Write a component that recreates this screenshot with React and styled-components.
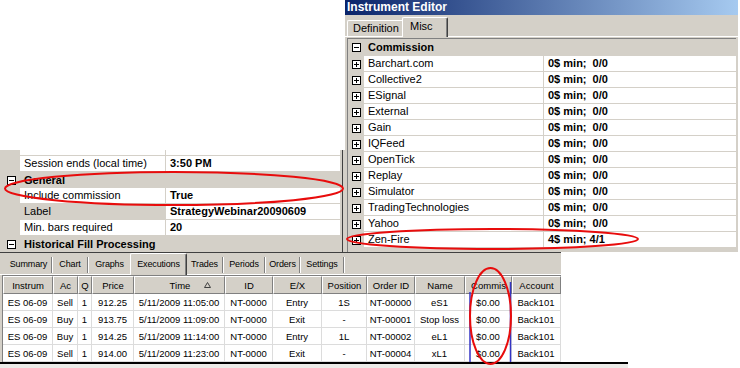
import React from "react";
import styled, { createGlobalStyle, css } from "styled-components";

const FONT = `"Liberation Sans", Arial, sans-serif`;
const FACE = "#d4d0c8";

const GlobalStyle = createGlobalStyle`
  *, *::before, *::after { box-sizing: border-box; }
  html, body { margin: 0; padding: 0; background: #fff; }
  body { width: 740px; height: 368px; overflow: hidden; font-family: ${FONT}; color: #000; }
`;

const Desktop = styled.div`
  position: relative;
  width: 740px;
  height: 368px;
  background: #fff;
  overflow: hidden;
`;

const Win = styled.div`
  position: absolute;
  left: ${(p) => p.$x}px;
  top: ${(p) => p.$y}px;
  width: ${(p) => p.$w}px;
  height: ${(p) => p.$h}px;
  background: ${FACE};
  display: flex;
  flex-direction: ${(p) => (p.$row ? "row" : "column")};
  overflow: hidden;
  ${(p) => p.$topLine && css`border-top: 1px solid #404040;`}
`;

/* ---------- Instrument editor ---------- */
const TitleBar = styled.div`
  flex: none;
  height: 15px;
  padding-left: 2px;
  background: linear-gradient(90deg, #0a246a 0%, #a6caf0 100%);
  color: #fff;
  font: bold 12px/15px ${FONT};
  white-space: nowrap;
`;

const EditorTabs = styled.div`
  flex: none;
  height: 22px;
  display: flex;
  align-items: flex-end;
  padding-left: 2px;
  box-shadow: inset 0 -1px 0 #fff;
`;

const EditorTab = styled.div`
  width: ${(p) => p.$w}px;
  height: 16px;
  margin-bottom: 1px;
  padding-left: ${(p) => p.$pl}px;
  border-top: 1px solid #fff;
  border-left: 1px solid #fff;
  border-radius: 2px 0 0 0;
  font: 11px/14px ${FONT};
  white-space: nowrap;
  ${(p) =>
    p.$active &&
    css`
      height: 20px;
      margin-bottom: 0;
      background: ${FACE};
      border-right: 1px solid #404040;
      box-shadow: inset -1px 0 0 #808080;
      border-radius: 2px 2px 0 0;
      line-height: 16px;
    `}
`;

const EditorBody = styled.div`
  flex: 1;
  min-height: 0;
  display: flex;
  padding: 1px 2px 0 2px;
`;

const PropGrid = styled.div`
  flex: 1;
  min-width: 0;
  display: flex;
  flex-direction: column;
  background: #fff;
  overflow: hidden;
  ${(p) => p.$framed && css`
    border-top: 1px solid #808080;
    border-left: 1px solid #808080;
  `}
`;

const Row = styled.div`
  flex: none;
  display: grid;
  grid-template-columns: ${(p) => p.$m}px ${(p) => p.$n}px 1fr;
  height: ${(p) => p.$h || 16}px;
  font: 11px/15px ${FONT};
`;

const Margin = styled.div`
  background: ${FACE};
  display: flex;
  align-items: center;
  padding-left: ${(p) => p.$pad}px;
`;

const NameCell = styled.div`
  background: ${(p) => (p.$sel ? FACE : "#fff")};
  border-right: 1px solid ${FACE};
  border-bottom: 1px solid ${FACE};
  padding-left: 4px;
  white-space: nowrap;
  overflow: hidden;
`;

const ValueCell = styled.div`
  background: #fff;
  border-bottom: 1px solid ${FACE};
  padding-left: 4px;
  font-weight: bold;
  white-space: pre;
  overflow: hidden;
`;

const CategoryRow = styled.div`
  flex: none;
  display: flex;
  height: ${(p) => p.$h || 16}px;
  background: ${FACE};
  font: bold 11px/15px ${FONT};
  white-space: nowrap;
`;

const CatMargin = styled.div`
  width: ${(p) => p.$m}px;
  flex: none;
  display: flex;
  align-items: center;
  padding-left: ${(p) => p.$pad}px;
`;

const CatLabel = styled.div`
  padding-left: 4px;
  display: flex;
  align-items: center;
`;

const ExpandBox = styled.span`
  position: relative;
  flex: none;
  width: 9px;
  height: 9px;
  border: 1px solid #000;
  background: #fff;
  &::before {
    content: "";
    position: absolute;
    left: 1px;
    top: 3px;
    width: 5px;
    height: 1px;
    background: #000;
  }
  ${(p) =>
    p.$plus &&
    css`
      &::after {
        content: "";
        position: absolute;
        left: 3px;
        top: 1px;
        width: 1px;
        height: 5px;
        background: #000;
      }
    `}
`;

const ScrollEdge = styled.div`
  flex: none;
  width: 5px;
  background: linear-gradient(90deg, ${FACE} 0 2px, #404040 2px 3px, ${FACE} 3px);
`;

/* ---------- Bottom results window ---------- */
const ResultTabs = styled.div`
  flex: none;
  height: 22px;
  display: flex;
  padding-left: 6px;
  box-shadow: inset 0 -1px 0 #fff;
`;

const ResultTab = styled.div`
  position: relative;
  flex: none;
  width: ${(p) => p.$w}px;
  display: flex;
  align-items: center;
  justify-content: center;
  font: 9px ${FONT};
  letter-spacing: -0.15px;
  white-space: nowrap;
  padding-right: ${(p) => (p.$sep ? 2 : 0)}px;
  ${(p) =>
    p.$sep &&
    css`
      &::after {
        content: "";
        position: absolute;
        right: 0;
        top: 4px;
        bottom: 2px;
        width: 2px;
        border-left: 1px solid #808080;
        border-right: 1px solid #fff;
      }
    `}
  ${(p) =>
    p.$active &&
    css`
      background: ${FACE};
      border-top: 1px solid #fff;
      border-left: 1px solid #fff;
      border-right: 1px solid #404040;
      box-shadow: inset -1px 0 0 #808080;
      border-radius: 2px 2px 0 0;
      padding-bottom: 2px;
    `}
`;

const COLS = [50, 25, 14, 42, 91, 48, 49, 45, 48, 50, 47, 49];

const Table = styled.div`
  margin-left: 2px;
  border-left: 1px solid #808080;
  border-top: 1px solid #808080;
  display: grid;
  grid-template-columns: ${COLS.map((c) => `${c}px`).join(" ")};
  grid-template-rows: 18px;
  grid-auto-rows: 17px;
  background: #fff;
  font: 9.5px ${FONT};
  flex: 1;
  align-content: start;
`;

const HeadCell = styled.div`
  background: ${FACE};
  border-style: solid;
  border-width: 1px;
  border-color: #fff #808080 #808080 #fff;
  display: flex;
  align-items: center;
  justify-content: center;
  gap: 14px;
  padding-left: ${(p) => (p.$sort ? 22 : 0)}px;
  white-space: nowrap;
  overflow: hidden;
`;

const Cell = styled.div`
  border-right: 1px solid #dcdcdc;
  border-bottom: 1px solid #dcdcdc;
  display: flex;
  align-items: center;
  justify-content: center;
  white-space: nowrap;
  overflow: hidden;
`;

const BottomEdge = styled.div`
  position: absolute;
  left: 0;
  top: 362px;
  width: 628px;
  height: 6px;
  border-top: 2px solid #000;
  background: #ecebe8;
`;

const Annotation = styled.svg`
  position: absolute;
  left: 0;
  top: 0;
  width: 740px;
  height: 368px;
  pointer-events: none;
  z-index: 5;
`;

/* ---------- data ---------- */
const INSTR = [
  ["Barchart.com", "0$ min;  0/0"],
  ["Collective2", "0$ min;  0/0"],
  ["ESignal", "0$ min;  0/0"],
  ["External", "0$ min;  0/0"],
  ["Gain", "0$ min;  0/0"],
  ["IQFeed", "0$ min;  0/0"],
  ["OpenTick", "0$ min;  0/0"],
  ["Replay", "0$ min;  0/0"],
  ["Simulator", "0$ min;  0/0"],
  ["TradingTechnologies", "0$ min;  0/0"],
  ["Yahoo", "0$ min;  0/0"],
  ["Zen-Fire", "4$ min; 4/1"],
];

const TABS = [
  { t: "Summary", w: 47, sep: true },
  { t: "Chart", w: 36, sep: true },
  { t: "Graphs", w: 41 },
  { t: "Executions", w: 57, active: true },
  { t: "Trades", w: 37, sep: true },
  { t: "Periods", w: 42, sep: true },
  { t: "Orders", w: 35, sep: true },
  { t: "Settings", w: 44, sep: true },
];

const HEAD = ["Instrum", "Ac", "Q", "Price", "Time", "ID", "E/X", "Position", "Order ID", "Name", "Commis", "Account"];

const ROWS = [
  ["ES 06-09", "Sell", "1", "912.25", "5/11/2009 11:05:00", "NT-0000", "Entry", "1S", "NT-00000", "eS1", "$0.00", "Back101"],
  ["ES 06-09", "Buy", "1", "913.75", "5/11/2009 11:09:00", "NT-0000", "Exit", "-", "NT-00001", "Stop loss", "$0.00", "Back101"],
  ["ES 06-09", "Buy", "1", "914.25", "5/11/2009 11:14:00", "NT-0000", "Entry", "1L", "NT-00002", "eL1", "$0.00", "Back101"],
  ["ES 06-09", "Sell", "1", "914.00", "5/11/2009 11:23:00", "NT-0000", "Exit", "-", "NT-00004", "xL1", "$0.00", "Back101"],
];

const SortGlyph = () => (
  <svg width="7" height="6" viewBox="0 0 7 6">
    <path d="M3.5 0.5 L6.5 5.5 L0.5 5.5 Z" fill="none" stroke="#404040" strokeWidth="1" />
  </svg>
);

function LeftRow({ name, value, sel, h }) {
  return (
    <Row $m={20} $n={146} $h={h}>
      <Margin $pad={7} />
      <NameCell $sel={sel}>{name}</NameCell>
      <ValueCell>{value}</ValueCell>
    </Row>
  );
}

function LeftCat({ label }) {
  return (
    <CategoryRow>
      <CatMargin $m={20} $pad={7}>
        <ExpandBox />
      </CatMargin>
      <CatLabel>{label}</CatLabel>
    </CategoryRow>
  );
}

export default function App() {
  return (
    <Desktop>
      <GlobalStyle />

      {/* Strategy property grid */}
      <Win $x={0} $y={150} $w={345} $h={102} $row>
        <PropGrid>
          <LeftRow name="" value="" h={6} />
          <LeftRow name="Session ends (local time)" value="3:50 PM" />
          <LeftCat label="General" />
          <LeftRow name="Include commission" value="True" />
          <LeftRow name="Label" value="StrategyWebinar20090609" sel />
          <LeftRow name="Min. bars required" value="20" />
          <LeftCat label="Historical Fill Processing" />
        </PropGrid>
        <ScrollEdge />
      </Win>

      {/* Instrument Editor */}
      <Win $x={345} $y={0} $w={393} $h={252}>
        <TitleBar>Instrument Editor</TitleBar>
        <EditorTabs>
          <EditorTab $w={55} $pl={5}>Definition</EditorTab>
          <EditorTab $w={46} $pl={7} $active>Misc</EditorTab>
        </EditorTabs>
        <EditorBody>
          <PropGrid $framed>
            <CategoryRow $h={17}>
              <CatMargin $m={16} $pad={4}>
                <ExpandBox />
              </CatMargin>
              <CatLabel>Commission</CatLabel>
            </CategoryRow>
            {INSTR.map(([n, v]) => (
              <Row key={n} $m={16} $n={180}>
                <Margin $pad={4}>
                  <ExpandBox $plus />
                </Margin>
                <NameCell>{n}</NameCell>
                <ValueCell>{v}</ValueCell>
              </Row>
            ))}
            <CategoryRow>
              <CatMargin $m={16} $pad={4}>
                <ExpandBox />
              </CatMargin>
            </CategoryRow>
          </PropGrid>
        </EditorBody>
      </Win>

      {/* Strategy analyzer results */}
      <Win $x={0} $y={252} $w={561} $h={110} $topLine>
        <ResultTabs>
          {TABS.map((t) => (
            <ResultTab key={t.t} $w={t.w} $sep={t.sep} $active={t.active}>
              {t.t}
            </ResultTab>
          ))}
        </ResultTabs>
        <Table>
          {HEAD.map((h) =>
            h === "Time" ? (
              <HeadCell key={h} $sort>
                <span>{h}</span>
                <SortGlyph />
              </HeadCell>
            ) : (
              <HeadCell key={h}>{h}</HeadCell>
            )
          )}
          {ROWS.map((r, i) => r.map((c, j) => <Cell key={`${i}-${j}`}>{c}</Cell>))}
        </Table>
      </Win>

      <BottomEdge />

      <Annotation viewBox="0 0 740 368">
        <line x1="470" y1="292" x2="470" y2="362" stroke="#3434c4" strokeWidth="1.5" />
        <line x1="510.5" y1="282" x2="510.5" y2="362" stroke="#3434c4" strokeWidth="1.5" />
        <ellipse cx="174" cy="188.5" rx="169" ry="16.5" fill="none" stroke="#e80c0c" strokeWidth="2" />
        <ellipse cx="492.5" cy="239" rx="145.5" ry="10" fill="none" stroke="#e80c0c" strokeWidth="2" />
        <ellipse cx="490.5" cy="316" rx="20.5" ry="48" fill="none" stroke="#e80c0c" strokeWidth="2" />
      </Annotation>
    </Desktop>
  );
}
